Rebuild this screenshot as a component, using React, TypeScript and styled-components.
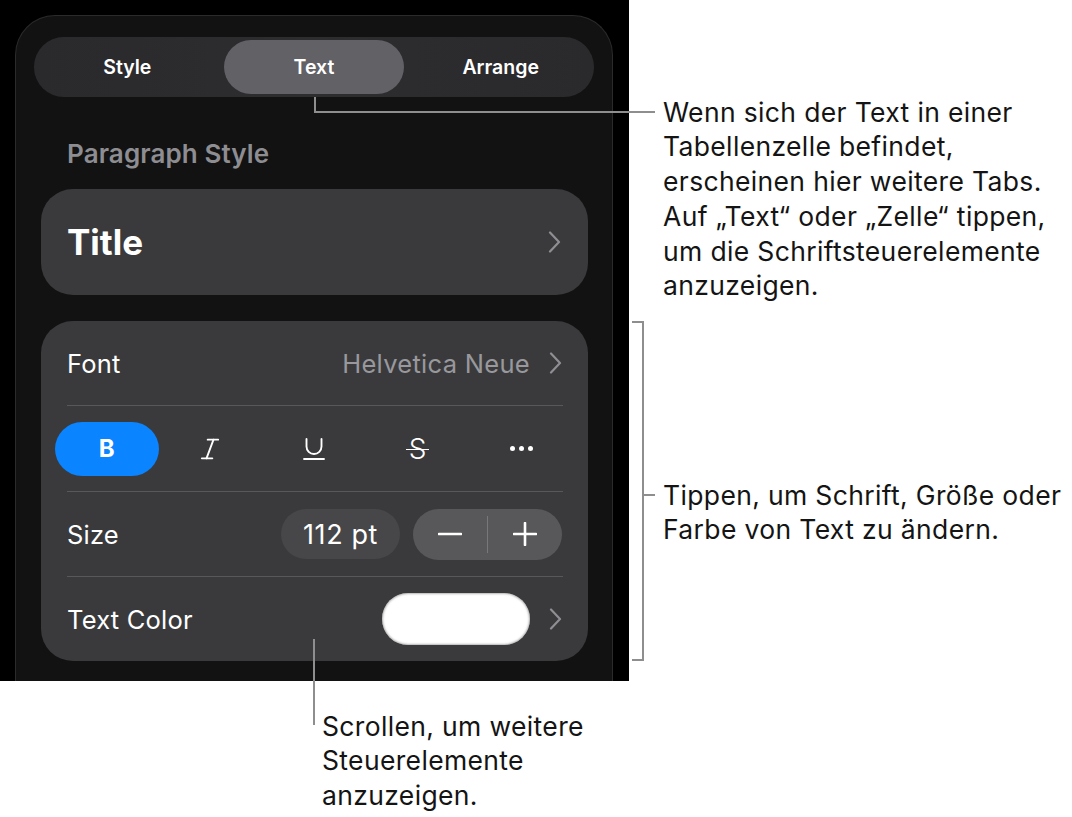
import React from "react";
import styled, { createGlobalStyle } from "styled-components";
import { Italic, Underline } from "lucide-react";

const Global = createGlobalStyle`
  html, body { margin: 0; padding: 0; background: #ffffff; }
  body { font-family: Inter, "Liberation Sans", sans-serif; -webkit-font-smoothing: antialiased; }
  * { box-sizing: border-box; }
`;

const Page = styled.div`
  position: relative;
  width: 1072px;
  height: 817px;
  overflow: hidden;
  background: #ffffff;
`;

const Screen = styled.div`
  width: 629px;
  height: 681px;
  background: #000000;
  padding: 15px 16px 0 15px;
  overflow: hidden;
`;

const Panel = styled.div`
  width: 598px;
  height: 720px;
  background: #121212;
  border: 1px solid #2b2b2b;
  border-bottom: none;
  border-radius: 40px 40px 0 0;
  padding: 21px 18px 0 18px;
  display: flex;
  flex-direction: column;
`;

const Segmented = styled.div`
  height: 60px;
  border-radius: 30px;
  background: linear-gradient(90deg, #2a2a2d 0%, #2d2d30 50%, #2a2a2c 100%);
  padding: 3px;
  display: grid;
  grid-template-columns: repeat(3, 1fr);
  column-gap: 6px;
`;

const Segment = styled.div<{ $active?: boolean }>`
  display: flex;
  align-items: center;
  justify-content: center;
  border-radius: 27px;
  background: ${(p) => (p.$active ? "#616166" : "transparent")};
  color: #ffffff;
  font-size: 19.5px;
  font-weight: 600;
  letter-spacing: 0px;
`;

const SectionLabel = styled.div`
  padding: 41px 0 0 33px;
  height: 92px;
  line-height: 32px;
  font-size: 26px;
  font-weight: 600;
  color: #8d8d92;
  letter-spacing: 0.1px;
`;

const Card = styled.div`
  margin: 0 6px 0 7px;
  background: #3a3a3c;
  border-radius: 32px;
`;

const TitleCard = styled(Card)`
  height: 106px;
  display: flex;
  align-items: center;
  justify-content: space-between;
  padding: 0 27px 0 26px;
`;

const TitleText = styled.div`
  font-size: 35px;
  font-weight: 700;
  color: #ffffff;
  letter-spacing: 0px;
`;

const GroupCard = styled(Card)`
  margin-top: 26px;
  display: flex;
  flex-direction: column;
`;

const Row = styled.div`
  height: 84px;
  display: flex;
  align-items: center;
  justify-content: space-between;
  padding: 0 26px 0 26px;
`;

const RowLabel = styled.div`
  font-size: 25.5px;
  color: #ffffff;
  letter-spacing: 0.2px;
`;

const RowRight = styled.div`
  display: flex;
  align-items: center;
  gap: 19px;
`;

const ValueText = styled.div`
  font-size: 25.5px;
  color: #98989d;
  letter-spacing: 0.3px;
`;

const Divider = styled.div`
  height: 1px;
  margin: 0 25px 0 26px;
  background: #58585b;
`;

const StyleRow = styled.div`
  height: 85px;
  display: grid;
  grid-template-columns: repeat(5, 1fr);
  align-items: center;
  padding: 0 15px 0 14px;
`;

const StyleButton = styled.div<{ $active?: boolean }>`
  height: 54px;
  border-radius: 27px;
  display: flex;
  align-items: center;
  justify-content: center;
  background: ${(p) => (p.$active ? "#0a84ff" : "transparent")};
  color: #ffffff;
`;

const BoldGlyph = styled.span`
  font-size: 24px;
  font-weight: 700;
`;

const StrikeGlyph = styled.span`
  position: relative;
  font-size: 28px;
  font-weight: 300;
  line-height: 1;
  &::after {
    content: "";
    position: absolute;
    left: -3px;
    right: -3px;
    top: 50%;
    height: 1.8px;
    background: #ffffff;
  }
`;

const Dots = styled.div`
  display: flex;
  gap: 4px;
`;

const Dot = styled.span`
  width: 5px;
  height: 5px;
  border-radius: 50%;
  background: #ffffff;
`;

const SizeControls = styled.div`
  display: flex;
  align-items: center;
  gap: 13px;
`;

const SizePill = styled.div`
  width: 119px;
  height: 50px;
  border-radius: 25px;
  background: #474749;
  display: flex;
  align-items: center;
  justify-content: center;
  font-size: 27px;
  color: #ffffff;
  letter-spacing: 0.6px;
`;

const Stepper = styled.div`
  width: 149px;
  height: 51px;
  border-radius: 26px;
  background: #58585a;
  display: grid;
  grid-template-columns: 1fr 1px 1fr;
  align-items: center;
`;

const StepperDivider = styled.div`
  height: 37px;
  background: #78787b;
`;

const StepperButton = styled.div`
  display: flex;
  align-items: center;
  justify-content: center;
`;

const Swatch = styled.div`
  width: 148px;
  height: 52px;
  border-radius: 26px;
  background: #ffffff;
  box-shadow: inset 0 0 2px 1px rgba(120, 120, 120, 0.55);
`;

const LineBase = styled.div`
  position: absolute;
  border-color: #8e8e8e;
  border-style: solid;
  border-width: 0;
`;

const TopLeader = styled(LineBase)`
  left: 314px;
  top: 97px;
  width: 341px;
  height: 16px;
  border-left-width: 2px;
  border-bottom-width: 2px;
`;

const Bracket = styled(LineBase)`
  left: 632px;
  top: 321px;
  width: 12px;
  height: 340px;
  border-top-width: 2px;
  border-right-width: 2px;
  border-bottom-width: 2px;
`;

const BracketTick = styled(LineBase)`
  left: 644px;
  top: 494px;
  width: 11px;
  height: 2px;
  background: #8e8e8e;
`;

const BottomLeader = styled(LineBase)`
  left: 313px;
  top: 639px;
  width: 2px;
  height: 86px;
  background: #8e8e8e;
`;

const Callout = styled.div<{ $left: number; $top: number }>`
  position: absolute;
  left: ${(p) => p.$left}px;
  top: ${(p) => p.$top}px;
  font-size: 26.5px;
  line-height: 34.8px;
  color: #141414;
  letter-spacing: 0.35px;
  white-space: nowrap;
`;

const CalloutLine = styled.div``;

const Chevron = () => (
  <svg width="13" height="22" viewBox="0 0 13 22" fill="none">
    <path d="M2 1.5 L11 11 L2 20.5" stroke="#8e8e93" strokeWidth="2.2" strokeLinecap="round" strokeLinejoin="round" />
  </svg>
);

const MinusIcon = () => (
  <svg width="24" height="24" viewBox="0 0 24 24" fill="none">
    <path d="M1 12 H23" stroke="#ffffff" strokeWidth="2.6" strokeLinecap="round" />
  </svg>
);

const PlusIcon = () => (
  <svg width="24" height="24" viewBox="0 0 24 24" fill="none">
    <path d="M1 12 H23 M12 1 V23" stroke="#ffffff" strokeWidth="2.6" strokeLinecap="round" />
  </svg>
);

export default function App() {
  return (
    <Page>
      <Global />
      <Screen>
        <Panel>
          <Segmented>
            <Segment>Style</Segment>
            <Segment $active>Text</Segment>
            <Segment>Arrange</Segment>
          </Segmented>
          <SectionLabel>Paragraph Style</SectionLabel>
          <TitleCard>
            <TitleText>Title</TitleText>
            <Chevron />
          </TitleCard>
          <GroupCard>
            <Row>
              <RowLabel>Font</RowLabel>
              <RowRight>
                <ValueText>Helvetica Neue</ValueText>
                <Chevron />
              </RowRight>
            </Row>
            <Divider />
            <StyleRow>
              <StyleButton $active>
                <BoldGlyph>B</BoldGlyph>
              </StyleButton>
              <StyleButton>
                <Italic size={28} strokeWidth={1.6} color="#ffffff" />
              </StyleButton>
              <StyleButton>
                <Underline size={30} strokeWidth={1.5} color="#ffffff" />
              </StyleButton>
              <StyleButton>
                <StrikeGlyph>S</StrikeGlyph>
              </StyleButton>
              <StyleButton>
                <Dots>
                  <Dot />
                  <Dot />
                  <Dot />
                </Dots>
              </StyleButton>
            </StyleRow>
            <Divider />
            <Row>
              <RowLabel>Size</RowLabel>
              <SizeControls>
                <SizePill>112 pt</SizePill>
                <Stepper>
                  <StepperButton>
                    <MinusIcon />
                  </StepperButton>
                  <StepperDivider />
                  <StepperButton>
                    <PlusIcon />
                  </StepperButton>
                </Stepper>
              </SizeControls>
            </Row>
            <Divider />
            <Row>
              <RowLabel>Text Color</RowLabel>
              <RowRight>
                <Swatch />
                <Chevron />
              </RowRight>
            </Row>
          </GroupCard>
        </Panel>
      </Screen>

      <TopLeader />
      <Callout $left={663} $top={94.5}>
        <CalloutLine>Wenn sich der Text in einer</CalloutLine>
        <CalloutLine>Tabellenzelle befindet,</CalloutLine>
        <CalloutLine>erscheinen hier weitere Tabs.</CalloutLine>
        <CalloutLine>Auf „Text“ oder „Zelle“ tippen,</CalloutLine>
        <CalloutLine>um die Schriftsteuerelemente</CalloutLine>
        <CalloutLine>anzuzeigen.</CalloutLine>
      </Callout>

      <Bracket />
      <BracketTick />
      <Callout $left={663} $top={477.5}>
        <CalloutLine>Tippen, um Schrift, Größe oder</CalloutLine>
        <CalloutLine>Farbe von Text zu ändern.</CalloutLine>
      </Callout>

      <BottomLeader />
      <Callout $left={322} $top={708.5}>
        <CalloutLine>Scrollen, um weitere</CalloutLine>
        <CalloutLine>Steuerelemente</CalloutLine>
        <CalloutLine>anzuzeigen.</CalloutLine>
      </Callout>
    </Page>
  );
}
